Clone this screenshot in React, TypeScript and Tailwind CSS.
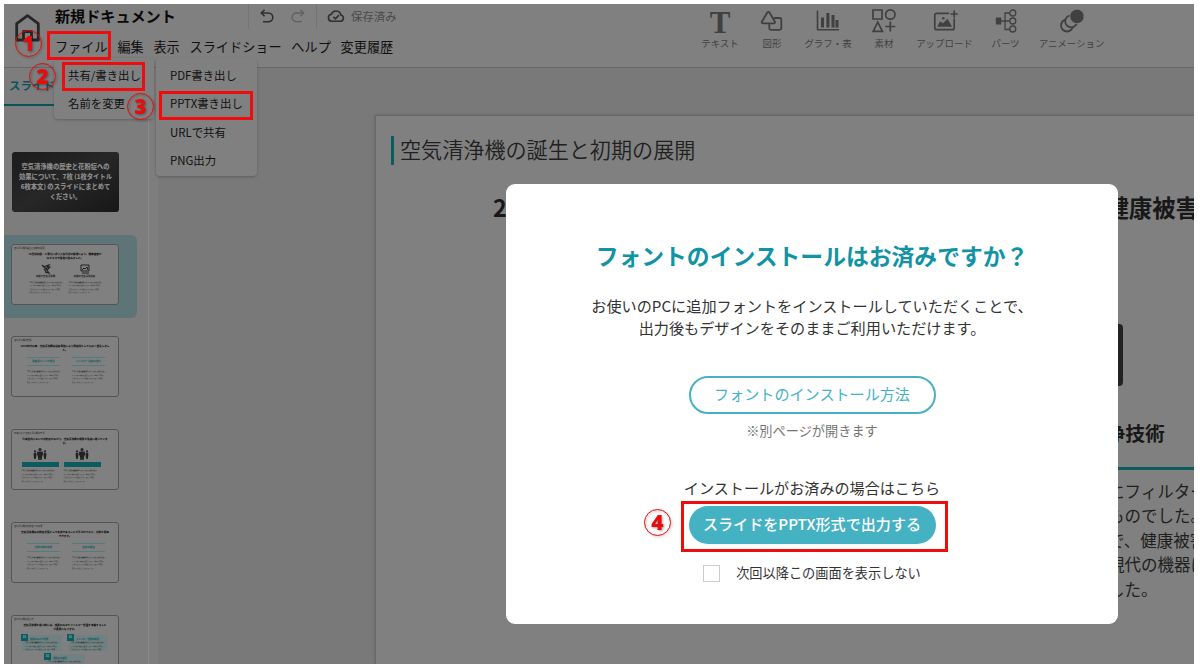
import React from "react";

const tools = [
  { label: "テキスト", x: "w-[58px]", icon: "text" },
  { label: "図形", x: "w-[46px]", icon: "shape" },
  { label: "グラフ・表", x: "w-[66px]", icon: "chart" },
  { label: "素材", x: "w-[46px]", icon: "parts" },
  { label: "アップロード", x: "w-[75px]", icon: "upload" },
  { label: "パーツ", x: "w-[47px]", icon: "tree" },
  { label: "アニメーション", x: "w-[85px]", icon: "anim" },
];

function ToolIcon({ name }: { name: string }) {
  const p = { width: 26, height: 26, viewBox: "0 0 26 26", fill: "none", stroke: "currentColor", strokeWidth: 2, strokeLinejoin: "round" as const, strokeLinecap: "round" as const };
  switch (name) {
    case "shape":
      return <svg {...p}><path d="M8.3 4.6 3 13.4a1.3 1.3 0 0 0 1.1 2h10.6a1.3 1.3 0 0 0 1.1-2L10.5 4.6a1.3 1.3 0 0 0-2.2 0z" strokeWidth="1.9" /><path d="M15.5 10h5.3a1.5 1.5 0 0 1 1.5 1.5v8.8a1.5 1.5 0 0 1-1.5 1.5h-9a1.5 1.5 0 0 1-1.5-1.5V16" strokeWidth="1.8" /></svg>;
    case "chart":
      return <svg {...p}><path d="M2.5 2.5v19.3h21.5" strokeWidth="1.6" strokeLinecap="butt" /><path d="M7.5 9.5v10M12.9 5v14.5M18 7v12.5M22 12v7.5" strokeWidth="3" strokeLinecap="butt" /></svg>;
    case "parts":
      return <svg {...p} strokeWidth="1.7"><path d="M2 2h9v9H2zM6.7 14.2 2.2 23.3h9.3z" strokeLinejoin="miter" /><circle cx="19.3" cy="6.5" r="4.7" /><path d="M19.3 13.5v10M14.3 18.5h10" strokeLinecap="butt" /></svg>;
    case "upload":
      return <svg {...p} strokeWidth="1.7"><path d="M16.5 5.3H4.8A2 2 0 0 0 2.8 7.3v12.4a2 2 0 0 0 2 2h15.4a2 2 0 0 0 2-2V11M22.2 3v6M19.2 6h6" /><path d="M5.3 18.7 8 13.3l3 2 4.5-4.6 4.6 8z" fill="currentColor" stroke="none" /><circle cx="11.3" cy="10.3" r="1.3" fill="currentColor" stroke="none" /></svg>;
    case "tree":
      return <svg {...p} strokeWidth="1.3"><path d="M2.8 9.5h5.5v7H2.8z" fill="currentColor" stroke="none" /><path d="M8 13h8M16.5 5h-4.5v16.5h4.5" /><circle cx="19.8" cy="5" r="3" /><circle cx="19.8" cy="13" r="3" /><circle cx="19.8" cy="21" r="3" /></svg>;
    case "anim":
      return <svg {...p} strokeWidth="1.8"><circle cx="8" cy="17.5" r="6" /><circle cx="12.2" cy="13.3" r="6" fill="#808080" /><circle cx="18" cy="8.4" r="7.2" fill="currentColor" stroke="#808080" strokeWidth=".8" /></svg>;
    default:
      return <span className="h-[26px] font-['Liberation_Serif',serif] text-[31px] leading-[29px] font-bold">T</span>;
  }
}

function Lines({ n = 4 }: { n?: number }) {
  const t = ["空気清浄機は健康被害を防ぐために開発が進み", "フィルター技術の進歩により、室内の空気を", "清浄に保つことが可能になり、多くの家庭で", "使用されるようになりました。", "普及しています。"];
  return <div className="w-[32px] text-[1.6px] leading-[3.5px] whitespace-nowrap text-[#1c1c1c]">{t.slice(0, n).map((s) => <div key={s}>{s}</div>)}</div>;
}

function Thumb({ title, head, tail, children }: { title: string; head: string; tail: string; children: React.ReactNode }) {
  return (
    <div className="h-[61px] w-[108px] shrink-0 overflow-hidden rounded-[3px] border border-[#555] bg-[#808080]">
      <div className="pt-[2px] pl-[2px] text-[2.2px] leading-[3px] whitespace-nowrap">{title}</div>
      <div className="mt-[2px] text-center text-[2.6px] leading-[4px] font-bold whitespace-nowrap text-black">{head}<br />{tail}</div>
      {children}
    </div>
  );
}

function Columns({ a, b }: { a: string; b: string }) {
  return (
    <div className="mt-[5px] flex justify-center gap-[12px] pl-[2px]">
      {[a, b].map((s) => (
        <div key={s} className="w-[33px]">
          <div className="mb-[4px] flex h-[9px] items-center justify-center border-y border-[#56797b] text-[2.5px] leading-[3px] font-bold whitespace-nowrap text-[#0b5a5e]">{s}</div>
          <Lines />
        </div>
      ))}
    </div>
  );
}

function People() {
  return (
    <svg width="14" height="12" viewBox="0 0 14 12" fill="#222" className="mx-auto">
      <circle cx="7" cy="1.6" r="1.5" /><path d="M4.3 3.5h5.4l.6 4-1-.3-.6 4.8H7.3L7 9l-.3 3H5.3l-.6-4.8-1 .3z" />
      <circle cx="2" cy="3.3" r="1.1" /><path d="M.7 4.8h2.6v3L2.8 11H1.2L.7 8zM10.7 4.8h2.6v3l-.5 3.2h-1.6l-.5-3z" /><circle cx="12" cy="3.3" r="1.1" />
    </svg>
  );
}

function Card({ s }: { s: string }) {
  return (
    <div className="relative h-[16px] w-[40px] bg-[#718080] pt-[2px] pl-[3px]">
      <div className="absolute -top-px -left-px flex size-[7px] items-center justify-center bg-[#0b5b60] text-[3px] leading-none font-bold text-[#8aa]">01</div>
      <div className="pl-[5px] text-[2.3px] leading-[4px] font-bold whitespace-nowrap text-[#0b5a5e]">{s}</div>
      <Lines n={3} />
    </div>
  );
}

function Badge({ n, className }: { n: string; className: string }) {
  return <div className={`absolute flex size-[27px] items-center justify-center rounded-full border-[1.5px] border-[#e80c0c] text-[21px] leading-none font-black text-[#e80c0c] drop-shadow-[1px_1px_1px_rgba(0,0,0,0.35)] font-['Open_Sans','Liberation_Sans',sans-serif] ${className}`}>{n}</div>;
}

function Header() {
  return (
    <header className="flex h-[64px] shrink-0 border-b border-[#686868] bg-[#808080]">
      <div className="w-[51px] shrink-0 pt-[9px] pl-[10px]">
        <svg width="28" height="30" viewBox="0 0 28 30" fill="none" stroke="#262626" strokeWidth="2.8" strokeLinejoin="round"><path d="M2.7 10.7 13.5 2.7l10.8 8V27H2.7z" /><path d="M9.5 27V18.5h8V27" /></svg>
      </div>
      <div className="flex w-[636px] shrink-0 flex-col whitespace-nowrap">
        <div className="flex h-[25px] items-center text-[15.1px] font-bold text-[#080808]">
          <span className="relative -top-px w-[193px]">新規ドキュメント</span>
          <div className="flex h-full w-[69px] items-center gap-[15px] border-x border-[#747474] pl-[10px] text-[#333]">
            <svg width="16" height="16" viewBox="0 0 16 16" fill="none" stroke="#303030" strokeWidth="1.6"><path d="M5.6.7 2.3 4l3.3 3.3M2.5 4h7a4.3 4.3 0 0 1 0 8.7H4" /></svg>
            <svg width="16" height="16" viewBox="0 0 16 16" fill="none" stroke="#606060" strokeWidth="1.3"><path d="m10.4.7 3.3 3.3-3.3 3.3M13.5 4h-7a4.3 4.3 0 0 0 0 8.7H12" /></svg>
          </div>
          <svg className="relative -top-px ml-[10px]" width="18" height="14" viewBox="0 0 18 14" fill="none" stroke="#303030" strokeWidth="1.6"><path d="M4.6 12.3a3.6 3.6 0 0 1-.3-7.1 5 5 0 0 1 9.6.8 3.2 3.2 0 0 1-.3 6.3z" /><path d="m6.3 7.8 2 2 3.7-3.7" /></svg>
          <span className="ml-[6px] text-[11.4px] font-normal text-[#4a4a4a]">保存済み</span>
        </div>
        <nav className="flex h-[36px] items-center gap-[9.8px] text-[13.15px] text-[#101010]">
          {["ファイル", "編集", "表示", "スライドショー", "ヘルプ", "変更履歴"].map((m) => <span key={m}>{m}</span>)}
        </nav>
      </div>
      <div className="flex pt-[4px] text-[#404040]">
        {tools.map((t) => (
          <div key={t.label} className={`flex shrink-0 flex-col items-center ${t.x}`}>
            <ToolIcon name={t.icon} />
            <span className="mt-px text-[9.45px] leading-[16px] whitespace-nowrap">{t.label}</span>
          </div>
        ))}
      </div>
    </header>
  );
}

function Sidebar() {
  return (
    <aside className="flex w-[145px] shrink-0 flex-col overflow-hidden border-r border-[#8a8a8a] bg-[#7d7d7d]">
      <div className="flex h-[38px] w-[52px] shrink-0 items-center border-b-2 border-[#0a5459] pl-[5px] text-[11.4px] font-bold whitespace-nowrap text-[#0a5459]">スライド</div>
      <div className="mt-[46px] ml-[8px] flex h-[60px] w-[107px] shrink-0 items-center justify-center rounded-[3px] bg-gradient-to-br from-[#1c1c1c] via-[#272727] to-[#171717] text-center text-[6.3px] leading-[10px] font-black whitespace-nowrap text-[#8c8c8c]">
        空気清浄機の歴史と花粉症への<br />効果について、7枚 (1枚タイトル<br />6枚本文) のスライドにまとめて<br />ください。
      </div>
      <div className="mt-[23px] flex h-[83px] w-[133px] shrink-0 items-center rounded-r-[6px] bg-[#5e7578] pb-[5px] pl-[7px]">
        <Thumb title="空気清浄機の誕生と初期の展開" head="20世紀初頭、工業化に伴う大気汚染の影響により、健康被害が" tail="広がる中で開発が進みました。">
          <div className="mt-[4px] flex justify-center gap-[7px]">
            <div className="flex w-[32px] flex-col items-center">
              <svg width="10" height="10" viewBox="0 0 10 10" fill="none" stroke="#222" strokeWidth="1.2"><path d="m1 1 4 4M2 3l6-2-3 4 3 4-4-1M6 3h3L6 6M3 5l3 4" /></svg>
              <div className="mb-[2px] text-[2.4px] leading-[5px] font-bold whitespace-nowrap">初期の空気清浄機</div><Lines />
            </div>
            <div className="flex w-[32px] flex-col items-center">
              <svg width="10" height="10" viewBox="0 0 10 10" fill="none" stroke="#222" strokeWidth="1"><path d="M1 1h8v6H1zM2 9h7M2 6l2-2 1 1 2-2 1 3" /></svg>
              <div className="mb-[2px] text-[2.4px] leading-[5px] font-bold whitespace-nowrap">初期の空気清浄技術</div><Lines />
            </div>
          </div>
        </Thumb>
      </div>
      <div className="mt-[18px] ml-[7px] flex flex-col gap-[32px]">
        <Thumb title="空気清浄機の発展" head="1950年代以降、空気清浄機は技術革新により家庭用としても広く普及しまし" tail="た。"><Columns a="家庭用としての普及" b="フィルター技術の進化" /></Thumb>
        <Thumb title="日本における空気清浄機の普及" head="日本国内において花粉症が広がり、空気清浄機の需要が急速に増えていま" tail="す。">
          <div className="mt-[3px] flex justify-center gap-[5px] pr-[8px]">
            {[1, 2].map((i) => <div key={i} className="w-[37px]"><People /><div className="mt-[2px] mb-[2px] h-[5px] bg-[#0b5b60]" /><Lines /></div>)}
          </div>
        </Thumb>
        <Thumb title="空気清浄機の花粉症への効果" head="空気清浄機は花粉症対策として有効であることが示されており、花粉を除去" tail="できます。"><Columns a="花粉の除去効果" b="症状の軽減" /></Thumb>
        <Thumb title="空気清浄機の選び方" head="空気清浄機を選ぶ際には、部屋の広さやフィルター性能を考慮すること" tail="が重要になります。">
          <div className="mt-[4px] flex justify-center gap-[6px]"><Card s="部屋の広さと性能" /><Card s="フィルター性能の確認" /></div>
          <div className="mt-[3px] flex justify-center"><Card s="運転音の確認" /></div>
        </Thumb>
      </div>
    </aside>
  );
}

function Menu({ items, className }: { items: string[]; className: string }) {
  return (
    <div className={`absolute flex flex-col rounded-[4px] bg-[#808080] text-[11.4px] text-[#101010] shadow-[0_1px_3px_rgba(0,0,0,0.22)] ${className}`}>
      {items.map((i) => <div key={i} className="flex h-[28.5px] items-center pl-[14px] whitespace-nowrap">{i}</div>)}
    </div>
  );
}

function Dialog() {
  return (
    <section className="absolute top-[184px] left-[506px] flex h-[440px] w-[612px] flex-col items-center rounded-[9px] bg-white text-[15.1px] text-[#333]">
      <h2 className="mt-[55px] text-[22.8px] leading-[34px] font-bold whitespace-nowrap text-[#1193a5]">フォントのインストールはお済みですか？</h2>
      <p className="mt-[21px] text-center text-[15.15px] leading-[22px] whitespace-nowrap">お使いのPCに追加フォントをインストールしていただくことで、<br />出力後もデザインをそのままご利用いただけます。</p>
      <button className="mt-[38px] h-[38px] w-[247px] shrink-0 rounded-full border-2 border-[#45b2c4] pb-[3px] text-[#45b2c4]">フォントのインストール方法</button>
      <p className="mt-[7px] text-[13.2px] leading-[20px] text-[#757575]">※別ページが開きます</p>
      <p className="mt-[35px] leading-[22px]">インストールがお済みの場合はこちら</p>
      <button className="mt-[8px] h-[38px] w-[247px] shrink-0 rounded-full bg-[#45b2c4] pb-[3px] font-medium whitespace-nowrap text-white">スライドをPPTX形式で出力する</button>
      <label className="mt-[19px] flex items-center gap-[16px] text-[13.2px] leading-[20px]"><span className="size-[17px] border border-[#ccc]" />次回以降この画面を表示しない</label>
    </section>
  );
}

export default function App() {
  return (
    <div className="relative h-[670px] w-[1200px] overflow-hidden bg-white p-[4px] font-['Noto_Sans_CJK_JP',sans-serif] text-[#202020]">
      <div className="flex h-[660px] w-[1190px] flex-col overflow-hidden">
        <Header />
        <div className="flex min-h-0 flex-1">
          <Sidebar />
          <main className="flex flex-1 overflow-hidden bg-[#797979]">
            <div className="w-[9px] shrink-0 bg-[#7d7d7d]" />
            <div className="mt-[47px] ml-[217px] w-[819px] shrink-0 border-t border-l border-[#686868] bg-[#808080] pt-[20px] pl-[15px] shadow-[0_0_3px_rgba(0,0,0,0.2)]">
              <div className="flex h-[29px] w-max items-center border-l-[3px] border-[#0b5b60] pb-[2px] pl-[6px] text-[21.1px] font-[350] whitespace-nowrap">空気清浄機の誕生と初期の展開</div>
              <div className="mt-[25px] ml-[102px] flex w-[706px] justify-between text-[23.4px] leading-[35px] font-bold whitespace-nowrap text-[#181818]"><span>20世紀</span><span>健康被害</span></div>
              <div className="mt-[99px] ml-[600px] h-[62px] w-[132px] rounded-[4px] bg-[#222]" />
              <div className="mt-[31px] ml-[600px] h-[53px] w-[210px] border-b-[3px] border-[#0b5b60] pl-[55px] text-[19.8px] leading-[31px] font-bold whitespace-nowrap text-[#181818]">空気清浄技術</div>
              <div className="mt-[9px] ml-[717px] text-[16.5px] leading-[24.4px] whitespace-nowrap">にフィルター<br />ものでした。<br />で、健康被害<br />現代の機器に<br />した。</div>
            </div>
          </main>
        </div>
      </div>
      <Menu items={["共有/書き出し", "名前を変更"]} className="top-[58px] left-[54px] h-[61px] w-[100px] pt-[3px]" />
      <Menu items={["PDF書き出し", "PPTX書き出し", "URLで共有", "PNG出力"]} className="top-[58px] left-[156px] h-[118px] w-[101px] pt-[3px]" />
      <Dialog />
      <div className="absolute top-[31px] left-[47px] h-[29px] w-[64px] border-[3px] border-[#f00c0c]" />
      <div className="absolute top-[62px] left-[62px] h-[29px] w-[83px] border-[3px] border-[#f00c0c]" />
      <div className="absolute top-[91px] left-[159px] h-[29px] w-[94px] border-[3px] border-[#f00c0c]" />
      <div className="absolute top-[501px] left-[681px] h-[51px] w-[267px] border-[3px] border-[#f00c0c]" />
      <Badge n="1" className="top-[30px] left-[15px]" />
      <Badge n="2" className="top-[63px] left-[29px]" />
      <Badge n="3" className="top-[93px] left-[127px]" />
      <Badge n="4" className="top-[509px] left-[644px]" />
    </div>
  );
}
